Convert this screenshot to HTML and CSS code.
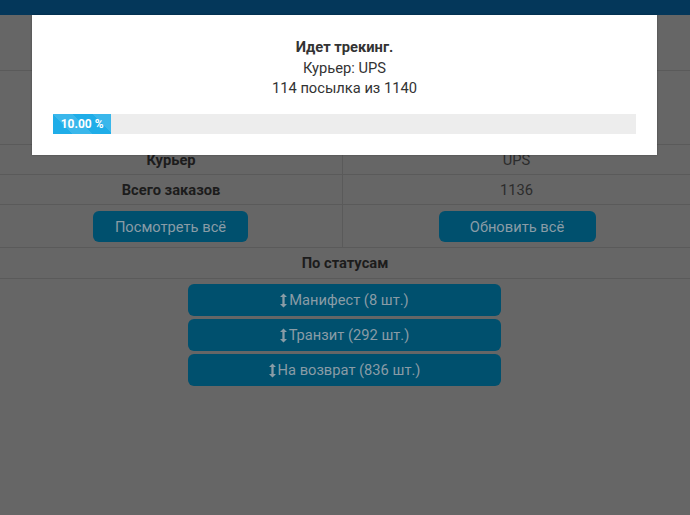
FILE: index.html
```html
<!DOCTYPE html>
<html lang="ru">
<head>
<meta charset="utf-8">
<link rel="stylesheet" href="styles.css">
</head>
<body>
<header class="topbar"></header>
<main class="page">
  <div class="block block-a"></div>
  <div class="block block-b"></div>
  <div class="row"><div class="cell label">Курьер</div><div class="cell value">UPS</div></div>
  <div class="row"><div class="cell label">Всего заказов</div><div class="cell value">1136</div></div>
  <div class="row row-btns">
    <div class="cell"><button class="btn btn-wide">Посмотреть всё</button></div>
    <div class="cell"><button class="btn btn-wide2">Обновить всё</button></div>
  </div>
  <div class="section-title">По статусам</div>
  <div class="statuses">
    <button class="btn btn-status"><svg class="ico" viewBox="0 0 8 16" width="7" height="15"><path d="M4 0 L8 4 H5.3 V12 H8 L4 16 L0 12 H2.7 V4 H0 Z" fill="currentColor"/></svg>Манифест (8 шт.)</button>
    <button class="btn btn-status"><svg class="ico" viewBox="0 0 8 16" width="7" height="15"><path d="M4 0 L8 4 H5.3 V12 H8 L4 16 L0 12 H2.7 V4 H0 Z" fill="currentColor"/></svg>Транзит (292 шт.)</button>
    <button class="btn btn-status"><svg class="ico" viewBox="0 0 8 16" width="7" height="15"><path d="M4 0 L8 4 H5.3 V12 H8 L4 16 L0 12 H2.7 V4 H0 Z" fill="currentColor"/></svg>На возврат (836 шт.)</button>
  </div>
</main>
<div class="modal">
  <p class="m-title">Идет трекинг.</p>
  <p class="m-line">Курьер: UPS</p>
  <p class="m-line">114 посылка из 1140</p>
  <div class="progress"><div class="bar" style="width:10%">10.00 %</div></div>
</div>
</body>
</html>
```
FILE: styles.css
```css
html, body { margin: 0; padding: 0; }
body {
  background: #666666;
  font-family: Roboto, "Noto Sans", Arial, sans-serif;
  font-size: 14.7px;
  color: #1e1e1e;
  width: 690px;
  height: 515px;
  overflow: hidden;
  position: relative;
}
.topbar { height: 15px; background: #04375a; }
.block { border-bottom: 1px solid #5a5a5a; }
.block-a { height: 55px; }
.block-b { height: 73px; }
.row {
  display: grid;
  grid-template-columns: 342px 1fr;
  border-bottom: 1px solid #5a5a5a;
}
.cell {
  height: 29px;
  display: flex;
  align-items: center;
  justify-content: center;
}
.cell + .cell { border-left: 1px solid #5a5a5a; }
.label { font-weight: 700; color: #1c1c1c; }
.value { color: #2c2c2c; }
.row-btns .cell { height: 42px; }
.btn {
  background: #00506e;
  color: #8a9ca6;
  border: none;
  border-radius: 6px;
  font-family: inherit;
  font-size: 14.7px;
  height: 31px;
  padding: 0;
  cursor: pointer;
}
.btn-wide { width: 155px; margin-left: -1px; margin-top: 1px; }
.btn-wide2 { width: 157px; margin-left: 1px; margin-top: 1px; }
.section-title {
  height: 30px;
  display: flex;
  align-items: center;
  justify-content: center;
  font-weight: 700;
  color: #1c1c1c;
  border-bottom: 1px solid #5a5a5a;
}
.statuses {
  display: flex;
  flex-direction: column;
  align-items: center;
  gap: 3px;
  padding-top: 5px;
  margin-left: -1px;
}
.btn-status {
  width: 313px;
  height: 32px;
  display: flex;
  align-items: center;
  justify-content: center;
  gap: 2px;
}
.ico { display: block; margin-top: 1px; }
.modal {
  position: absolute;
  left: 32px;
  top: 15px;
  width: 583px;
  height: 140px;
  padding: 0 21px;
  box-sizing: content-box;
  background: #ffffff;
  text-align: center;
  box-shadow: 0 0 2px rgba(0,0,0,0.3);
}
.modal p { margin: 0; line-height: 20.5px; color: #333333; }
.m-title { font-weight: 700; padding-top: 22px; }
.progress {
  margin-top: 15px;
  height: 20px;
  background: #ededed;
  display: flex;
}
.bar {
  background-color: #1fade8;
  background-image: linear-gradient(45deg, rgba(255,255,255,0.12) 25%, transparent 25%, transparent 50%, rgba(255,255,255,0.12) 50%, rgba(255,255,255,0.12) 75%, transparent 75%, transparent);
  background-size: 40px 40px;
  color: #ffffff;
  font-size: 12px;
  font-weight: 700;
  line-height: 20px;
  text-align: center;
}
```
